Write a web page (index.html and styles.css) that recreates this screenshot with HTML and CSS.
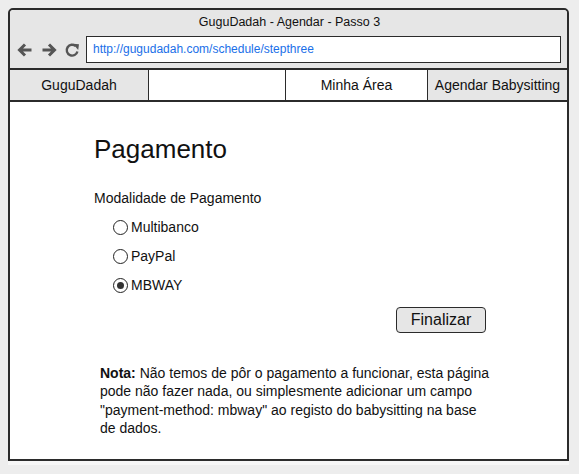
FILE: index.html
```html
<!DOCTYPE html>
<html lang="pt">
<head>
<meta charset="utf-8">
<title>GuguDadah - Agendar - Passo 3</title>
<link rel="stylesheet" href="styles.css">
</head>
<body>
<div class="window">
  <div class="titlebar">
    <div class="title">GuguDadah - Agendar - Passo 3</div>
    <div class="toolbar">
      <div class="navicons">
        <svg width="16" height="16" viewBox="0 0 16 16" class="icon"><path d="M14.5 8H3M8 2.5L2.5 8L8 13.5" fill="none" stroke="#555" stroke-width="3" stroke-linejoin="miter"/></svg>
        <svg width="16" height="16" viewBox="0 0 16 16" class="icon"><path d="M1.5 8H13M8 2.5L13.5 8L8 13.5" fill="none" stroke="#555" stroke-width="3" stroke-linejoin="miter"/></svg>
        <svg width="16" height="16" viewBox="0 0 16 16" class="icon reload"><path d="M13.4 9.4A5.4 5.4 0 1 1 11.8 4.2" fill="none" stroke="#555" stroke-width="2.4"/><path d="M9 1.8L15 2.2L14.2 8Z" fill="#555"/></svg>
      </div>
      <div class="url">http://gugudadah.com/schedule/stepthree</div>
    </div>
  </div>
  <nav class="nav">
    <div class="navcell gray">GuguDadah</div>
    <div class="navcell"></div>
    <div class="navcell">Minha Área</div>
    <div class="navcell gray">Agendar Babysitting</div>
  </nav>
  <main class="content">
    <h1 class="heading">Pagamento</h1>
    <div class="label">Modalidade de Pagamento</div>
    <div class="options">
      <div class="option"><span class="radio"></span><span>Multibanco</span></div>
      <div class="option"><span class="radio"></span><span>PayPal</span></div>
      <div class="option"><span class="radio checked"></span><span>MBWAY</span></div>
    </div>
    <div class="actions"><button class="btn">Finalizar</button></div>
    <p class="note"><b class="note-key">Nota:</b> Não temos de pôr o pagamento a funcionar, esta página pode não fazer nada, ou simplesmente adicionar um campo "payment-method: mbway" ao registo do babysitting na base de dados.</p>
  </main>
</div>
</body>
</html>
```

FILE: styles.css
```css
* { box-sizing: border-box; }
html, body { margin: 0; padding: 0; }
body {
  background: #ededed;
  font-family: "Liberation Sans", Arial, sans-serif;
  color: #111;
  width: 579px;
  height: 474px;
  overflow: hidden;
}
.window {
  margin: 8px 0 0 8px;
  width: 561px;
  height: 453px;
  border: 2px solid #2b2b2b;
  border-radius: 5px 5px 0 0;
  background: #fff;
  display: flex;
  flex-direction: column;
  box-shadow: 0 4px 0 #f6f6f6;
}
.titlebar {
  background: #e6e6e6;
  height: 58px;
  border-radius: 4px 4px 0 0;
  display: flex;
  flex-direction: column;
}
.title {
  text-align: center;
  font-size: 12.5px;
  line-height: 14px;
  padding-top: 5px;
  padding-left: 2px;
}
.toolbar {
  display: flex;
  align-items: center;
  margin-top: 7px;
  padding-left: 7px;
}
.navicons {
  display: flex;
  align-items: center;
  gap: 8px;
  width: 69px;
}
.icon { display: block; }
.reload { margin-left: -1px; }
.url {
  width: 475px;
  height: 27px;
  border: 1.5px solid #2b2b2b;
  background: #fff;
  color: #1a6fe8;
  font-size: 12px;
  line-height: 24px;
  padding-left: 6px;
}
.nav {
  display: grid;
  grid-template-columns: 138px 137px 142px 1fr;
  height: 34px;
  border-top: 2px solid #2b2b2b;
  border-bottom: 2px solid #2b2b2b;
}
.navcell {
  display: flex;
  align-items: center;
  justify-content: center;
  font-size: 14px;
  border-left: 1.5px solid #2b2b2b;
  background: #fff;
}
.navcell:first-child { border-left: none; }
.navcell.gray { background: #e6e6e6; }
.content {
  flex: 1;
  padding: 30px 0 0 84px;
}
.heading {
  margin: 0;
  font-weight: normal;
  font-size: 26px;
  line-height: 34px;
}
.label {
  margin-top: 23px;
  font-size: 14px;
  line-height: 18px;
}
.options {
  margin-top: 11px;
  padding-left: 19px;
  display: flex;
  flex-direction: column;
  gap: 11px;
}
.option {
  display: flex;
  align-items: center;
  font-size: 14px;
  line-height: 18px;
  gap: 3px;
}
.radio {
  width: 15px;
  height: 15px;
  border: 1.5px solid #222;
  border-radius: 50%;
  display: flex;
  align-items: center;
  justify-content: center;
  background: #fff;
}
.radio.checked::after {
  content: "";
  width: 7px;
  height: 7px;
  border-radius: 50%;
  background: #333;
}
.actions {
  margin-top: 13px;
  padding-left: 302px;
}
.btn {
  width: 90px;
  height: 26px;
  background: #e6e6e6;
  border: 1.5px solid #2b2b2b;
  border-radius: 4px;
  font-family: "Liberation Sans", Arial, sans-serif;
  font-size: 16px;
  color: #111;
  padding: 0;
}
.note {
  margin: 31px 0 0 6px;
  width: 392px;
  font-size: 14px;
  line-height: 18.4px;
}
.note-key { font-weight: bold; }
```
